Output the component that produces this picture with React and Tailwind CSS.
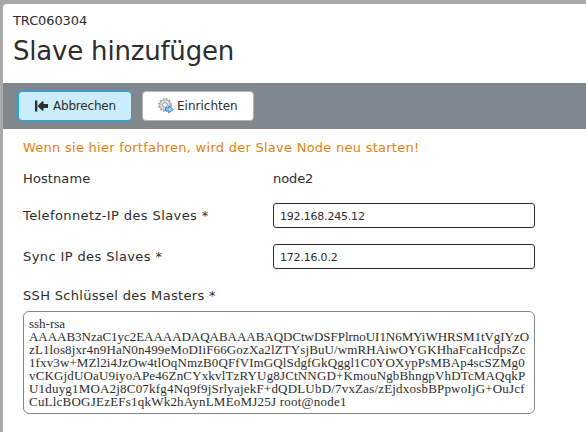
const keyLines = [
  ['ssh-rsa', 'tracking-[0px]'],
  ['AAAAB3NzaC1yc2EAAAADAQABAAABAQDCtwDSFPlrnoUI1N6MYiWHRSM1tVgIYzO', 'tracking-[-0.03px]'],
  ['zL1los8jxr4n9HaN0n499eMoDIiF66GozXa2lZTYsjBuU/wmRHAiwOYGKHhaFcaHcdpsZc', 'tracking-[0.12px]'],
  ['1fxv3w+MZl2i4JzOw4tlOqNmzB0QFfVImGQlSdgfGkQggl1C0YOXypPsMBAp4scSZMg0', 'tracking-[0.11px]'],
  ['vCKGjdUOaU9iyoAPe46ZnCYxkvlTzRYUg8JCtNNGD+KmouNgbBhngpVhDTcMAQqkP', 'tracking-[0.16px]'],
  ['U1duyg1MOA2j8C07kfg4Nq9f9jSrlyajekF+dQDLUbD/7vxZas/zEjdxosbBPpwoIjG+OuJcf', 'tracking-[0.19px]'],
  ['CuLlcBOGJEzEFs1qkWk2hAynLMEoMJ25J root@node1', 'tracking-[0.22px]'],
];

function BackIcon() {
  return (
    <svg width="13" height="12" viewBox="0 0 13 12" fill="#2d2d2d">
      <path d="M0 0.5h2.3v11H0zM2.5 6 7.6 0.9 8.6 1.9V4H13v4H8.6v2.1L7.6 11.1z" />
    </svg>
  );
}

function GearIcon() {
  return (
    <svg width="16" height="16" viewBox="0 0 16 16">
      <circle cx="7" cy="7" r="6" fill="none" stroke="#999" strokeWidth="1.7" strokeDasharray="1.9 1.242" />
      <circle cx="7" cy="7" r="4.1" fill="#fff" stroke="#dcdcdc" strokeWidth="2.6" />
      <circle cx="7" cy="7" r="5.2" fill="none" stroke="#a0a0a0" strokeWidth="0.7" />
      <circle cx="7" cy="7" r="2.4" fill="#fff" stroke="#858585" strokeWidth="0.9" />
      <path d="M7.6 9.9h3.2V7.9L15.3 11.4 10.8 14.9V12.9H7.6z" fill="#8fd8ff" stroke="#2478b8" strokeWidth="0.9" />
    </svg>
  );
}

function Label({ children, className }) {
  return (
    <div className="w-[250px] text-[13px] leading-[19px] whitespace-nowrap">
      <span className={className}>{children}</span>
    </div>
  );
}

function Field({ value }) {
  return (
    <div className="flex h-[25px] w-[262px] items-center rounded-[3px] border border-[#2d2d2d] bg-white px-[6px] pt-[2px]">
      <span className="text-[11px] leading-[17px] tracking-[-0.2px]">{value}</span>
    </div>
  );
}

export default function App() {
  return (
    <div className="h-[432px] w-[586px] overflow-hidden bg-[#a9a9a9] pt-1 pl-[3px] font-['DejaVu_Sans',sans-serif] text-[#2d2d2d]">
      <main className="h-full rounded-tl-[4px] bg-white">
        <header className="h-[79px] pt-[9px] pl-[10px] whitespace-nowrap">
          <div className="h-[16px] text-[13px] leading-[15px] tracking-[-0.1px]">TRC060304</div>
          <h1 className="mt-[4px] text-[26px] leading-[36px] tracking-[-0.2px]">Slave hinzufügen</h1>
        </header>
        <nav className="flex h-[46px] gap-[10px] bg-[#80878d] pt-2 pl-[15px]">
          <button className="flex h-[30px] w-[114px] items-center rounded-[4px] border border-[#00aeff] bg-[#cbecfa] pl-[16px] text-[12px] tracking-[-0.2px]">
            <BackIcon /><span className="ml-[5px]">Abbrechen</span>
          </button>
          <button className="flex h-[30px] w-[112px] items-center rounded-[4px] border border-[#b5b5b5] bg-white pl-[15px] text-[12px]">
            <GearIcon /><span className="ml-[3px]">Einrichten</span>
          </button>
        </nav>
        <form className="pl-5">
          <div className="flex h-[37px] items-center text-[13px] leading-[19px] tracking-[0.26px] whitespace-nowrap text-[#e08214]">
            <span>Wenn sie hier fortfahren, wird der Slave Node neu starten!</span>
          </div>
          <div className="flex h-[25px] items-center">
            <Label className="tracking-[0.1px]">Hostname</Label>
            <div className="text-[13px] leading-[19px] tracking-[-0.1px]">node2</div>
          </div>
          <div className="mt-[12px] flex h-[25px] items-center">
            <Label className="tracking-[0.4px]">Telefonnetz-IP des Slaves *</Label>
            <Field value="192.168.245.12" />
          </div>
          <div className="mt-[16px] flex h-[25px] items-center">
            <Label className="tracking-[0.4px]">Sync IP des Slaves *</Label>
            <Field value="172.16.0.2" />
          </div>
          <div className="mt-[16px] flex h-[21px] items-center">
            <Label className="tracking-[0.32px]">SSH Schlüssel des Masters *</Label>
          </div>
          <div className="mt-[5px] h-[103px] w-[512px] rounded-[6px] border border-[#80878d] pt-[5px] pl-[5px] font-['Liberation_Serif',serif] text-[13px] leading-[13px] whitespace-nowrap">
            {keyLines.map(([text, spacing]) => (
              <div key={text} className={spacing}>{text}</div>
            ))}
          </div>
        </form>
      </main>
    </div>
  );
}
